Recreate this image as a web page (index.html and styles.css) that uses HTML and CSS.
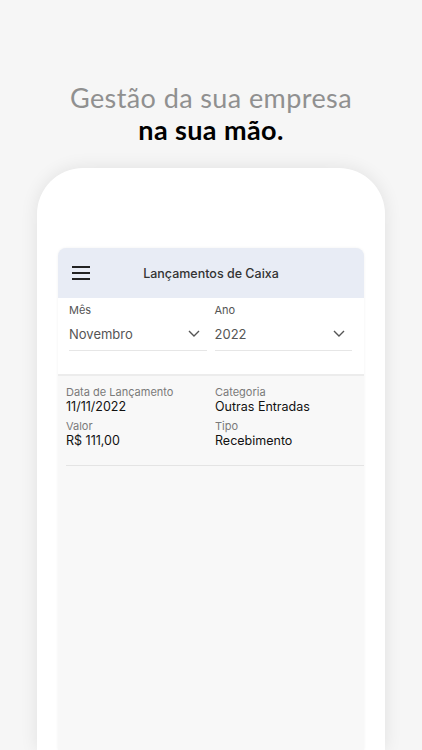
FILE: index.html
```html
<!DOCTYPE html>
<html lang="pt-BR">

<head>
    <meta charset="UTF-8">
    <meta name="viewport" content="width=device-width, initial-scale=1.0">
    <title>Lançamentos de Caixa</title>
    <link rel="stylesheet" href="styles.css">
</head>

<body>

    <h1 class="headline">
        <span class="light">Gestão da sua empresa</span>
        <span class="strong">na sua mão.</span>
    </h1>

    <div class="phone">
        <div class="screen">
            <div class="topbar">
                <svg class="menu" width="18" height="14" viewBox="0 0 18 14">
                    <path d="M0 1h18M0 7h18M0 13h18" stroke="#222" stroke-width="2" />
                </svg>
                <span class="title">Lançamentos de Caixa</span>
            </div>

            <div class="filters">
                <div class="field">
                    <label>Mês</label>
                    <div class="select">
                        <span>Novembro</span>
                        <svg width="12" height="7" viewBox="0 0 12 7">
                            <path d="M1 1l5 5 5-5" fill="none" stroke="#555" stroke-width="1.4" />
                        </svg>
                    </div>
                </div>
                <div class="field">
                    <label>Ano</label>
                    <div class="select">
                        <span>2022</span>
                        <svg width="12" height="7" viewBox="0 0 12 7">
                            <path d="M1 1l5 5 5-5" fill="none" stroke="#555" stroke-width="1.4" />
                        </svg>
                    </div>
                </div>
            </div>

            <div class="list">
                <div class="item">
                    <div class="cell">
                        <span class="key">Data de Lançamento</span>
                        <span class="val">11/11/2022</span>
                    </div>
                    <div class="cell">
                        <span class="key">Categoria</span>
                        <span class="val">Outras Entradas</span>
                    </div>
                    <div class="cell">
                        <span class="key">Valor</span>
                        <span class="val">R$ 111,00</span>
                    </div>
                    <div class="cell">
                        <span class="key">Tipo</span>
                        <span class="val">Recebimento</span>
                    </div>
                </div>
            </div>
        </div>
    </div>

</body>

</html>
```

FILE: styles.css
```css
* {
    margin: 0;
    padding: 0;
    box-sizing: border-box;
}

body {
    font-family: Inter, "Noto Sans", sans-serif;
    background-color: #f6f6f6;
    height: 750px;
    overflow: hidden;
}

.headline {
    padding-top: 82px;
    text-align: center;
    font-family: Lato, sans-serif;
    font-size: 27px;
    line-height: 32px;
    letter-spacing: 0.4px;
}

.headline span {
    display: block;
}

.light {
    font-weight: 400;
    color: #909090;
}

.strong {
    font-weight: 700;
    color: #000;
}

.phone {
    width: 348px;
    height: 582px;
    margin: 22px auto 0;
    padding: 80px 21px 0;
    background-color: #fff;
    border-radius: 46px 46px 0 0;
    box-shadow: 0 0 18px rgba(0, 0, 0, 0.09);
}

.screen {
    height: 100%;
    background-color: #f8f8f8;
    border-radius: 8px 8px 0 0;
    overflow: hidden;
    box-shadow: 0 0 3px rgba(0, 0, 0, 0.06);
}

.topbar {
    height: 50px;
    background-color: #e8ecf5;
    display: flex;
    align-items: center;
    padding-left: 14px;
}

.menu {
    flex-shrink: 0;
}

.title {
    flex: 1;
    text-align: center;
    margin-right: 32px;
    font-size: 12.5px;
    font-weight: 500;
    color: #333;
}

.filters {
    background-color: #fff;
    height: 78px;
    display: flex;
    gap: 8px;
    padding: 6px 12px 0 11px;
    border-bottom: 2px solid #ececec;
}

.field {
    flex: 1;
}

.field label {
    display: block;
    font-size: 11px;
    color: #555;
    line-height: 13px;
}

.select {
    display: flex;
    align-items: center;
    justify-content: space-between;
    height: 34px;
    padding-right: 7px;
    border-bottom: 1px solid #e6e6e6;
    font-size: 13px;
    color: #555;
}

.list {
    padding-left: 8px;
}

.item {
    display: grid;
    grid-template-columns: 149px 1fr;
    row-gap: 6px;
    padding: 10px 0 17px;
    border-bottom: 1px solid #e4e4e4;
}

.cell {
    display: flex;
    flex-direction: column;
}

.key {
    font-size: 11px;
    line-height: 13px;
    color: #7a7a7a;
}

.val {
    font-size: 12.5px;
    line-height: 15px;
    font-weight: 400;
    color: #111;
}
```
